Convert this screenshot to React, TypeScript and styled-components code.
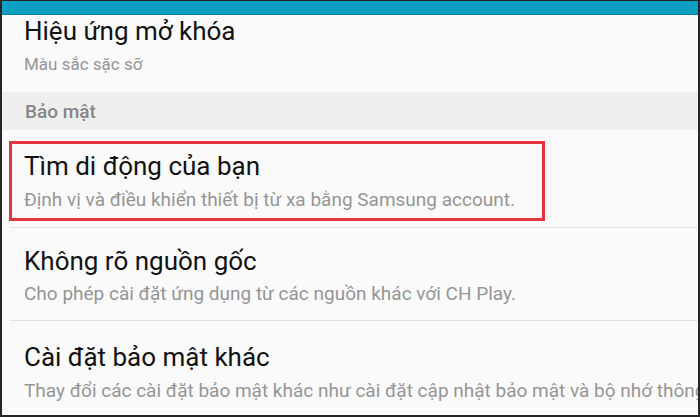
import React from 'react';
import styled, { createGlobalStyle } from 'styled-components';

const GlobalStyle = createGlobalStyle`
  html, body {
    margin: 0;
    padding: 0;
    background: #1f1f1f;
  }
  * {
    box-sizing: border-box;
  }
`;

const Frame = styled.div`
  width: 700px;
  height: 417px;
  overflow: hidden;
  background: #fafafa;
  border-style: solid;
  border-color: #262626;
  border-width: 1px 2px 2px 2px;
  font-family: Roboto, 'Noto Sans', sans-serif;
  display: flex;
  flex-direction: column;
`;

const TopBar = styled.div`
  height: 14px;
  flex: none;
  background: #0c9fc2;
  border-bottom: 1px solid #0a86a4;
`;

const Row = styled.div<{ $top: number; $bottom: number }>`
  padding: ${p => p.$top}px 0 ${p => p.$bottom}px 22px;
  white-space: nowrap;
  flex: none;
`;

const Divider = styled.div`
  height: 1px;
  margin-left: 8px;
  background: #e2e2e2;
  flex: none;
`;

const Highlight = styled.div`
  margin: 11px 0 6px 7px;
  width: 536px;
  flex: none;
  border: 3px solid #e3343f;
  padding: 7px 0 7px 12px;
  white-space: nowrap;
`;

const Title = styled.div`
  font-size: 26px;
  line-height: 30px;
  color: #121212;
`;

const Subtitle = styled.div<{ $small?: boolean }>`
  margin-top: ${p => (p.$small ? 8 : 7.5)}px;
  font-size: ${p => (p.$small ? 17 : 19)}px;
  line-height: ${p => (p.$small ? 20 : 22)}px;
  color: #959595;
`;

const SectionHeader = styled.div`
  height: 38px;
  flex: none;
  display: flex;
  align-items: center;
  padding-left: 23px;
  background: #efefef;
  color: #868686;
  font-size: 19px;
  font-weight: 500;
`;

export default function App() {
  return (
    <>
      <GlobalStyle />
      <Frame>
        <TopBar />
        <Row $top={1} $bottom={18}>
          <Title>Hiệu ứng mở khóa</Title>
          <Subtitle $small>Màu sắc sặc sỡ</Subtitle>
        </Row>
        <SectionHeader>Bảo mật</SectionHeader>
        <Highlight>
          <Title>Tìm di động của bạn</Title>
          <Subtitle>Định vị và điều khiển thiết bị từ xa bằng Samsung account.</Subtitle>
        </Highlight>
        <Divider />
        <Row $top={18} $bottom={15}>
          <Title>Không rõ nguồn gốc</Title>
          <Subtitle>Cho phép cài đặt ứng dụng từ các nguồn khác với CH Play.</Subtitle>
        </Row>
        <Divider />
        <Row $top={21} $bottom={0}>
          <Title>Cài đặt bảo mật khác</Title>
          <Subtitle>
            Thay đổi các cài đặt bảo mật khác như cài đặt cập nhật bảo mật và bộ nhớ thông tin xác thực.
          </Subtitle>
        </Row>
      </Frame>
    </>
  );
}
